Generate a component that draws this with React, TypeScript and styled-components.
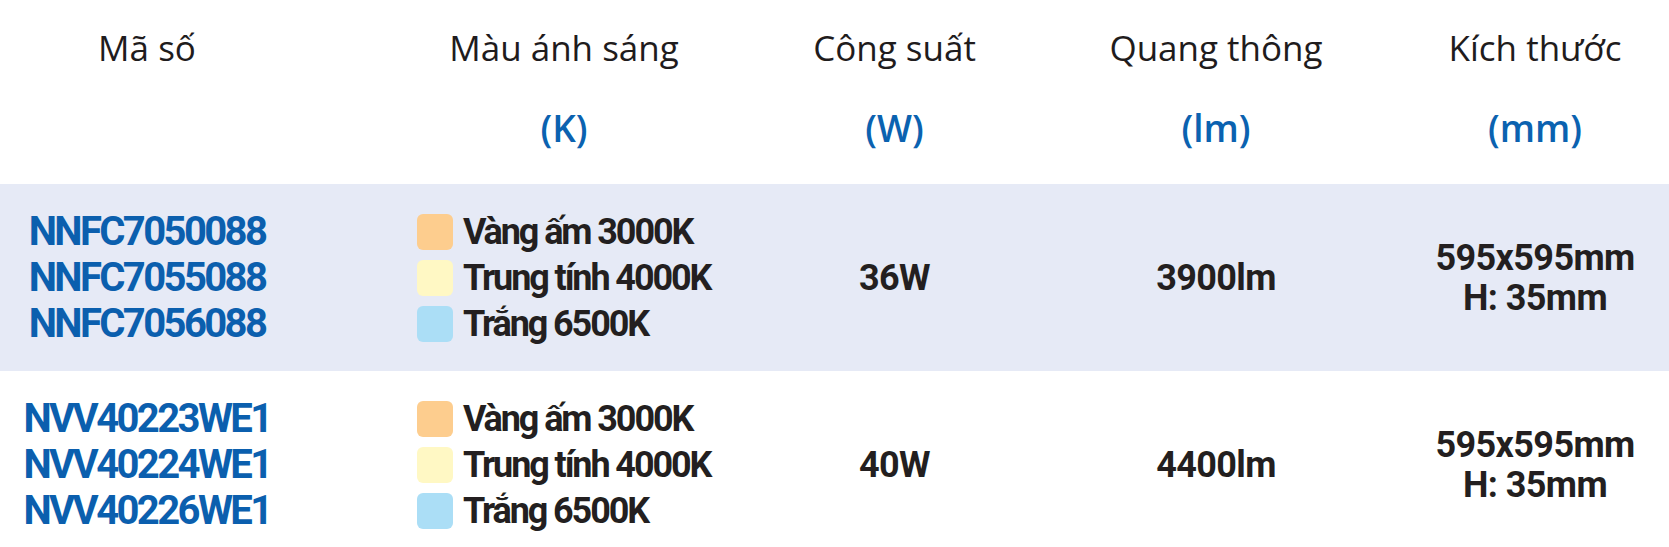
import React from "react";
import styled, { createGlobalStyle } from "styled-components";

const GlobalStyle = createGlobalStyle`
  html, body { margin: 0; padding: 0; background: #ffffff; }
  body { overflow: hidden; width: 1669px; height: 547px; }
`;

const COLS = "294px 440px 321px 322px 1fr";

const Table = styled.div`
  width: 1669px;
  display: flex;
  flex-direction: column;
`;

const HeaderRow = styled.div`
  display: grid;
  grid-template-columns: ${COLS};
  height: 184px;
  box-sizing: border-box;
  padding-top: 24px;
  background: #ffffff;
`;

const HeadCell = styled.div<{ $shift?: number }>`
  display: flex;
  flex-direction: column;
  align-items: center;
  padding-left: ${(p) => p.$shift ?? 0}px;
  font-family: "Open Sans", "Noto Sans", sans-serif;
`;

const HeadTitle = styled.div`
  font-size: 35px;
  line-height: 48px;
  color: #1f1c1d;
  white-space: nowrap;
`;

const HeadUnit = styled.div`
  margin-top: 31px;
  font-size: 37px;
  line-height: 50px;
  font-weight: 600;
  color: #0b62b0;
  white-space: nowrap;
`;

const DataRow = styled.div<{ $shaded?: boolean }>`
  display: grid;
  grid-template-columns: ${COLS};
  height: 187px;
  box-sizing: border-box;
  background: ${(p) => (p.$shaded ? "#e6eaf6" : "#ffffff")};
  font-family: "Roboto", "Liberation Sans", sans-serif;
  font-weight: 700;
`;

const Cell = styled.div<{ $shift?: number; $left?: boolean }>`
  display: flex;
  flex-direction: column;
  justify-content: center;
  align-items: ${(p) => (p.$left ? "flex-start" : "center")};
  padding-left: ${(p) => p.$shift ?? 0}px;
`;

const Code = styled.div`
  font-size: 40px;
  line-height: 46px;
  letter-spacing: -2.6px;
  color: #0b5fae;
  white-space: nowrap;
`;

const ColorItem = styled.div`
  display: flex;
  align-items: center;
  gap: 10px;
  height: 46px;
`;

const Swatch = styled.span<{ $color: string }>`
  width: 36px;
  height: 36px;
  border-radius: 6px;
  background: ${(p) => p.$color};
  flex: none;
`;

const ColorName = styled.span`
  font-size: 36px;
  line-height: 46px;
  color: #231f20;
  white-space: nowrap;
  letter-spacing: -2.1px;
`;

const Value = styled.div`
  font-size: 36px;
  line-height: 40px;
  letter-spacing: -0.6px;
  color: #231f20;
  white-space: nowrap;
  text-align: center;
`;

const headers = [
  { title: "Mã số", unit: "", shift: 0 },
  { title: "Màu ánh sáng", unit: "(K)", shift: 100 },
  { title: "Công suất", unit: "(W)", shift: 0 },
  { title: "Quang thông", unit: "(lm)", shift: 0 },
  { title: "Kích thước", unit: "(mm)", shift: 24 },
];

const colors = [
  { name: "Vàng ấm 3000K", color: "#fdcd8e" },
  { name: "Trung tính 4000K", color: "#fff8c4" },
  { name: "Trắng 6500K", color: "#abdef6" },
];

const rows = [
  {
    codes: ["NNFC7050088", "NNFC7055088", "NNFC7056088"],
    power: "36W",
    flux: "3900lm",
    size: ["595x595mm", "H: 35mm"],
  },
  {
    codes: ["NVV40223WE1", "NVV40224WE1", "NVV40226WE1"],
    power: "40W",
    flux: "4400lm",
    size: ["595x595mm", "H: 35mm"],
  },
];

export default function App() {
  return (
    <>
      <GlobalStyle />
      <Table>
        <HeaderRow>
          {headers.map((h) => (
            <HeadCell key={h.title} $shift={h.shift}>
              <HeadTitle>{h.title}</HeadTitle>
              {h.unit && <HeadUnit>{h.unit}</HeadUnit>}
            </HeadCell>
          ))}
        </HeaderRow>
        {rows.map((r, i) => (
          <DataRow key={i} $shaded={i === 0}>
            <Cell>
              {r.codes.map((c) => (
                <Code key={c}>{c}</Code>
              ))}
            </Cell>
            <Cell $left $shift={123}>
              {colors.map((c) => (
                <ColorItem key={c.name}>
                  <Swatch $color={c.color} />
                  <ColorName>{c.name}</ColorName>
                </ColorItem>
              ))}
            </Cell>
            <Cell>
              <Value>{r.power}</Value>
            </Cell>
            <Cell>
              <Value>{r.flux}</Value>
            </Cell>
            <Cell $shift={24}>
              {r.size.map((s) => (
                <Value key={s}>{s}</Value>
              ))}
            </Cell>
          </DataRow>
        ))}
      </Table>
    </>
  );
}
